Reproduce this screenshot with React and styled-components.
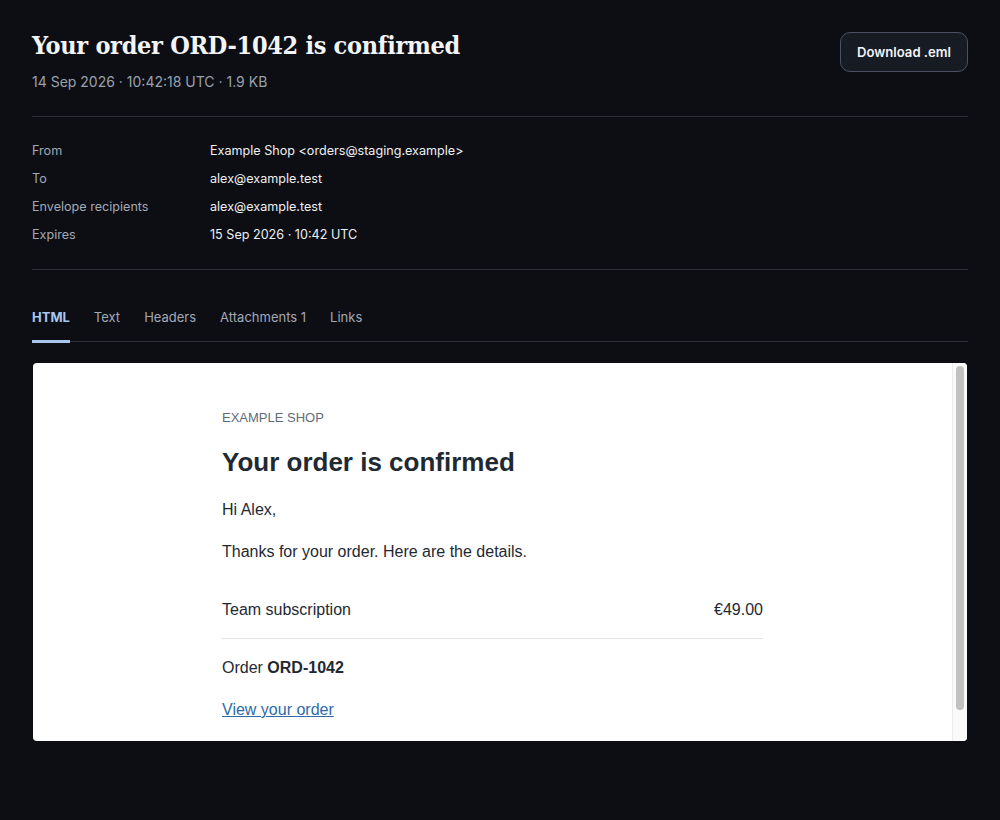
import React from "react";
import styled, { createGlobalStyle } from "styled-components";

const Global = createGlobalStyle`
  html, body { margin: 0; padding: 0; background: #0c0e14; }
  body { font-family: Inter, "Noto Sans", sans-serif; color: #e6e8eb; }
  * { box-sizing: border-box; }
`;

const Page = styled.div`
  padding: 30px 32px 40px;
  min-height: 820px;
  background: #0c0e14;
`;

const Header = styled.header`
  display: flex;
  justify-content: space-between;
  align-items: flex-start;
  padding-bottom: 24px;
  border-bottom: 1px solid #2a2f3a;
`;

const TitleBlock = styled.div`
  display: flex;
  flex-direction: column;
  gap: 10px;
`;

const Title = styled.h1`
  margin: 0;
  font-family: "DejaVu Serif", "Liberation Serif", serif;
  font-stretch: condensed;
  font-weight: 700;
  font-size: 25px;
  line-height: 32px;
  color: #f3f4f6;
  letter-spacing: -0.3px;
`;

const Sub = styled.div`
  font-size: 14px;
  color: #9aa1ad;
  line-height: 20px;
`;

const Button = styled.button`
  margin-top: 2px;
  height: 40px;
  padding: 0 16px;
  border-radius: 10px;
  border: 1px solid #4a5262;
  background: #161b24;
  color: #f3f4f6;
  font-family: Inter, sans-serif;
  font-weight: 600;
  font-size: 13.1px;
`;

const Meta = styled.dl`
  margin: 0;
  padding: 19px 0 21px;
  display: grid;
  grid-template-columns: 178px 1fr;
  grid-auto-rows: 28px;
  align-items: center;
  border-bottom: 1px solid #2a2f3a;
`;

const Label = styled.dt`
  font-size: 12.6px;
  color: #a3a9b4;
`;

const Value = styled.dd`
  margin: 0;
  font-size: 12.6px;
  color: #eef0f3;
`;

const Tabs = styled.nav`
  margin-top: 38px;
  display: flex;
  gap: 24px;
  border-bottom: 1px solid #2a2f3a;
`;

const Tab = styled.div`
  font-size: 13px;
  line-height: 18px;
  padding-bottom: 14px;
  margin-bottom: -2px;
  color: ${(p) => (p.$active ? "#a9c7ee" : "#a3a9b4")};
  font-weight: ${(p) => (p.$active ? 700 : 400)};
  border-bottom: 3px solid ${(p) => (p.$active ? "#a9c7ee" : "transparent")};
`;

const Frame = styled.div`
  margin: 21px 1px 0;
  height: 378px;
  background: #fff;
  border-radius: 4px;
  overflow: hidden;
  display: flex;
`;

const Viewport = styled.div`
  flex: 1;
  overflow: hidden;
`;

const ScrollTrack = styled.div`
  width: 15px;
  flex: none;
  background: #fafafa;
  border-left: 1px solid #ececec;
  padding: 3px 3px 31px 3px;
  display: flex;
`;

const Thumb = styled.div`
  flex: 1;
  background: #c1c1c1;
  border-radius: 5px;
`;

const Mail = styled.div`
  max-width: 541px;
  margin: 0 auto;
  padding: 47px 0 60px;
  font-family: "Liberation Sans", Arial, sans-serif;
  color: #1f2933;
`;

const Brand = styled.div`
  font-size: 13px;
  color: #5f6b7a;
  text-transform: uppercase;
  line-height: 16px;
`;

const MailTitle = styled.h2`
  margin: 20px 0 0;
  font-size: 26px;
  line-height: 32px;
  font-weight: 700;
  color: #1f2933;
`;

const P = styled.p`
  margin: ${(p) => p.$top || 16}px 0 0;
  font-size: 16px;
  line-height: 26px;
`;

const ItemRow = styled.div`
  margin-top: 35px;
  display: flex;
  justify-content: space-between;
  font-size: 16px;
  line-height: 20px;
  padding-bottom: 18px;
  border-bottom: 1px solid #e2e4e8;
`;

const Link = styled.a`
  color: #2e6aa8;
  text-decoration: underline;
  font-size: 16px;
`;

export default function App() {
  return (
    <>
      <Global />
      <Page>
        <Header>
          <TitleBlock>
            <Title>Your order ORD-1042 is confirmed</Title>
            <Sub>14 Sep 2026 · 10:42:18 UTC · 1.9 KB</Sub>
          </TitleBlock>
          <Button>Download .eml</Button>
        </Header>
        <Meta>
          <Label>From</Label>
          <Value>Example Shop &lt;orders@staging.example&gt;</Value>
          <Label>To</Label>
          <Value>alex@example.test</Value>
          <Label>Envelope recipients</Label>
          <Value>alex@example.test</Value>
          <Label>Expires</Label>
          <Value>15 Sep 2026 · 10:42 UTC</Value>
        </Meta>
        <Tabs>
          <Tab $active>HTML</Tab>
          <Tab>Text</Tab>
          <Tab>Headers</Tab>
          <Tab>Attachments 1</Tab>
          <Tab>Links</Tab>
        </Tabs>
        <Frame>
          <Viewport>
            <Mail>
              <Brand>Example Shop</Brand>
              <MailTitle>Your order is confirmed</MailTitle>
              <P $top={19}>Hi Alex,</P>
              <P>Thanks for your order. Here are the details.</P>
              <ItemRow>
                <span>Team subscription</span>
                <span>€49.00</span>
              </ItemRow>
              <P $top={16}>
                Order <strong>ORD-1042</strong>
              </P>
              <P $top={16}>
                <Link href="#">View your order</Link>
              </P>
            </Mail>
          </Viewport>
          <ScrollTrack>
            <Thumb />
          </ScrollTrack>
        </Frame>
      </Page>
    </>
  );
}
